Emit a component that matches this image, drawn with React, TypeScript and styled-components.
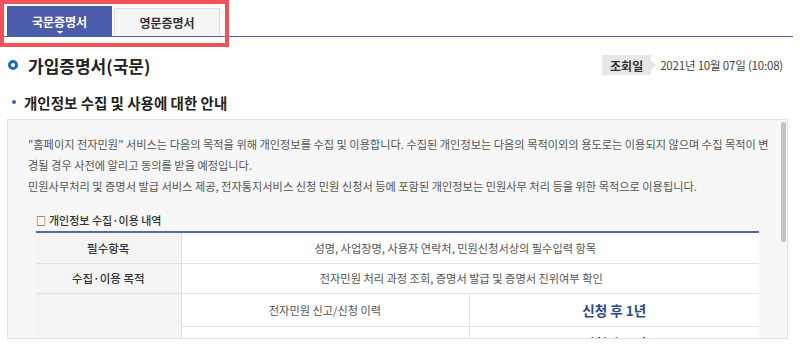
import { createGlobalStyle, styled } from "styled-components";

const GlobalStyle = createGlobalStyle`
  html, body {
    margin: 0;
    padding: 0;
    background: #fff;
  }
  body {
    font-family: "Noto Sans CJK KR", "Noto Sans", sans-serif;
    color: #333;
  }
`;

// Types
type Row = {
  head?: string;
  headSpan?: number;
  cells: { text: string; strong?: boolean; span?: number; pad?: number }[];
  height: number;
};

const rows: Row[] = [
  {
    head: "필수항목",
    height: 31,
    cells: [{ text: "성명, 사업장명, 사용자 연락처, 민원신청서상의 필수입력 항목", span: 2, pad: 30 }],
  },
  {
    head: "수집·이용 목적",
    height: 30,
    cells: [{ text: "전자민원 처리 과정 조회, 증명서 발급 및 증명서 진위여부 확인", span: 2, pad: 18 }],
  },
  {
    head: "보유기간",
    headSpan: 3,
    height: 33,
    cells: [{ text: "전자민원 신고/신청 이력" }, { text: "신청 후 1년", strong: true }],
  },
  {
    height: 33,
    cells: [{ text: "전자민원 증명서(발급문)" }, { text: "신청 후 3년", strong: true }],
  },
  {
    height: 33,
    cells: [{ text: "전자민원 처리 관련 기록" }, { text: "신청 후 5년", strong: true }],
  },
];

// Styled Components
const Page = styled.div`
  width: 800px;
  height: 351px;
  overflow: hidden;
`;

const TabArea = styled.div`
  position: relative;
  display: flex;
  align-items: flex-end;
  gap: 2px;
  height: 30px;
  padding: 6px 0 0 7px;
  margin-right: 7px;
  border-bottom: 1px solid #5564ad;
`;

const Tab = styled.div<{ $active?: boolean }>`
  position: relative;
  box-sizing: border-box;
  width: ${(p) => (p.$active ? "105px" : "106px")};
  height: ${(p) => (p.$active ? "31px" : "28px")};
  margin-bottom: ${(p) => (p.$active ? "-1px" : "0")};
  display: flex;
  align-items: center;
  justify-content: center;
  font-size: 12px;
  font-weight: 700;
  color: ${(p) => (p.$active ? "#fff" : "#333")};
  background: ${(p) => (p.$active ? "#4a5cab" : "#f5f5f5")};
  border: ${(p) => (p.$active ? "none" : "1px solid #dcdcdc")};
  border-bottom: none;
`;

const Caret = styled.span`
  position: absolute;
  left: 50%;
  bottom: 3px;
  margin-left: -3px;
  border-left: 3px solid transparent;
  border-right: 3px solid transparent;
  border-top: 3px solid #fff;
`;

const Highlight = styled.div`
  position: absolute;
  left: 0;
  top: 0;
  width: 229px;
  height: 47px;
  box-sizing: border-box;
  border: 4px solid #ef5359;
  pointer-events: none;
`;

const TitleRow = styled.div`
  display: flex;
  align-items: center;
  justify-content: space-between;
  height: 28px;
  margin-top: 14px;
  padding: 0 17px 0 8px;
`;

const Title = styled.h1`
  display: flex;
  align-items: center;
  gap: 10px;
  margin: 0;
  font-size: 17px;
  font-weight: 700;
  color: #222;
`;

const Ring = styled.span`
  width: 10px;
  height: 10px;
  box-sizing: border-box;
  border: 3px solid #1c6cc0;
  border-radius: 50%;
`;

const Meta = styled.div`
  display: flex;
  align-items: center;
  gap: 9px;
`;

const MetaLabel = styled.span`
  position: relative;
  display: flex;
  align-items: center;
  height: 20px;
  padding: 0 8px;
  background: #e7e7e7;
  font-size: 12px;
  font-weight: 700;
  color: #333;

  &::after {
    content: "";
    position: absolute;
    right: -5px;
    top: 5px;
    border-top: 5px solid transparent;
    border-bottom: 5px solid transparent;
    border-left: 5px solid #e7e7e7;
  }
`;

const MetaValue = styled.span`
  font-size: 11.5px;
  letter-spacing: -0.2px;
  color: #444;
`;

const SectionHeading = styled.h2`
  display: flex;
  align-items: center;
  gap: 8px;
  margin: 12px 0 0 12px;
  height: 22px;
  font-size: 14.5px;
  font-weight: 700;
  color: #222;

  &::before {
    content: "";
    width: 4px;
    height: 4px;
    border-radius: 50%;
    background: #3a63b5;
  }
`;

const ScrollFrame = styled.div`
  display: flex;
  height: 220px;
  box-sizing: border-box;
  margin: 6px 12px 0 7px;
  background: #f7f7f7;
  border: 1px solid #e2e2e2;
`;

const ScrollContent = styled.div`
  flex: 1;
  min-width: 0;
  overflow: hidden;
`;

const ScrollTrack = styled.div`
  flex: none;
  width: 8px;
  padding: 2px 1px 0 2px;
  box-sizing: border-box;
`;

const ScrollThumb = styled.div`
  height: 120px;
  border-radius: 3px;
  background: #c3c3c3;
`;

const Intro = styled.p`
  margin: 0;
  padding: 14px 0 0 20px;
  font-size: 11.2px;
  line-height: 21px;
  color: #555;
  white-space: nowrap;
`;

const TableSection = styled.section`
  padding: 14px 20px 24px 28px;
`;

const Caption = styled.div`
  font-size: 11px;
  font-weight: 500;
  line-height: 18px;
  color: #333;
  margin-bottom: 1px;
`;

const Box = styled.span`
  font-size: 10px;
  margin-right: 3px;
`;

const Table = styled.table`
  width: 723px;
  border-collapse: collapse;
  table-layout: fixed;
  background: #fff;
  border-top: 2px solid #5564ad;
`;

const HeadCell = styled.th`
  background: #f4f4f4;
  border-bottom: 1px solid #e3e3e3;
  border-right: 1px solid #e3e3e3;
  font-size: 11.5px;
  font-weight: 500;
  color: #333;
  text-align: center;
  vertical-align: middle;
  padding: 0;
`;

const Cell = styled.td<{ $strong?: boolean }>`
  border-bottom: 1px solid #e3e3e3;
  border-left: 1px solid #e3e3e3;
  text-align: center;
  vertical-align: middle;
  padding: 0;
  font-size: ${(p) => (p.$strong ? "13.5px" : "11.2px")};
  font-weight: ${(p) => (p.$strong ? 700 : 400)};
  color: ${(p) => (p.$strong ? "#2c4a8c" : "#555")};
`;

const Note = styled.p`
  margin: 10px 0 0;
  font-size: 11.2px;
  line-height: 20px;
  color: #555;
`;

export default function App() {
  return (
    <Page>
      <GlobalStyle />
      <TabArea>
        <Tab $active>
          국문증명서
          <Caret />
        </Tab>
        <Tab>영문증명서</Tab>
        <Highlight />
      </TabArea>

      <TitleRow>
        <Title>
          <Ring />
          가입증명서(국문)
        </Title>
        <Meta>
          <MetaLabel>조회일</MetaLabel>
          <MetaValue>2021년 10월 07일 (10:08)</MetaValue>
        </Meta>
      </TitleRow>

      <SectionHeading>개인정보 수집 및 사용에 대한 안내</SectionHeading>

      <ScrollFrame>
        <ScrollContent>
          <Intro>
            "홈페이지 전자민원" 서비스는 다음의 목적을 위해 개인정보를 수집 및 이용합니다. 수집된 개인정보는 다음의 목적이외의 용도로는 이용되지 않으며 수집 목적이 변
            <br />
            경될 경우 사전에 알리고 동의를 받을 예정입니다.
            <br />
            민원사무처리 및 증명서 발급 서비스 제공, 전자통지서비스 신청 민원 신청서 등에 포함된 개인정보는 민원사무 처리 등을 위한 목적으로 이용됩니다.
          </Intro>

          <TableSection>
            <Caption>
              <Box>□</Box>개인정보 수집·이용 내역
            </Caption>
            <Table>
              <colgroup>
                <col style={{ width: "145px" }} />
                <col style={{ width: "288px" }} />
                <col />
              </colgroup>
              <tbody>
                {rows.map((row, idx) => (
                  <tr key={idx} style={{ height: row.height }}>
                    {row.head && <HeadCell rowSpan={row.headSpan}>{row.head}</HeadCell>}
                    {row.cells.map((c, i) => (
                      <Cell
                        key={i}
                        colSpan={c.span}
                        $strong={c.strong}
                        style={c.pad ? { paddingRight: c.pad } : undefined}
                      >
                        {c.text}
                      </Cell>
                    ))}
                  </tr>
                ))}
              </tbody>
            </Table>
            <Note>※ 위 개인정보 수집·이용에 대한 동의를 거부할 권리가 있으나, 동의를 거부할 경우 전자민원 서비스 이용이 제한됩니다.</Note>
          </TableSection>
        </ScrollContent>
        <ScrollTrack>
          <ScrollThumb />
        </ScrollTrack>
      </ScrollFrame>
    </Page>
  );
}
